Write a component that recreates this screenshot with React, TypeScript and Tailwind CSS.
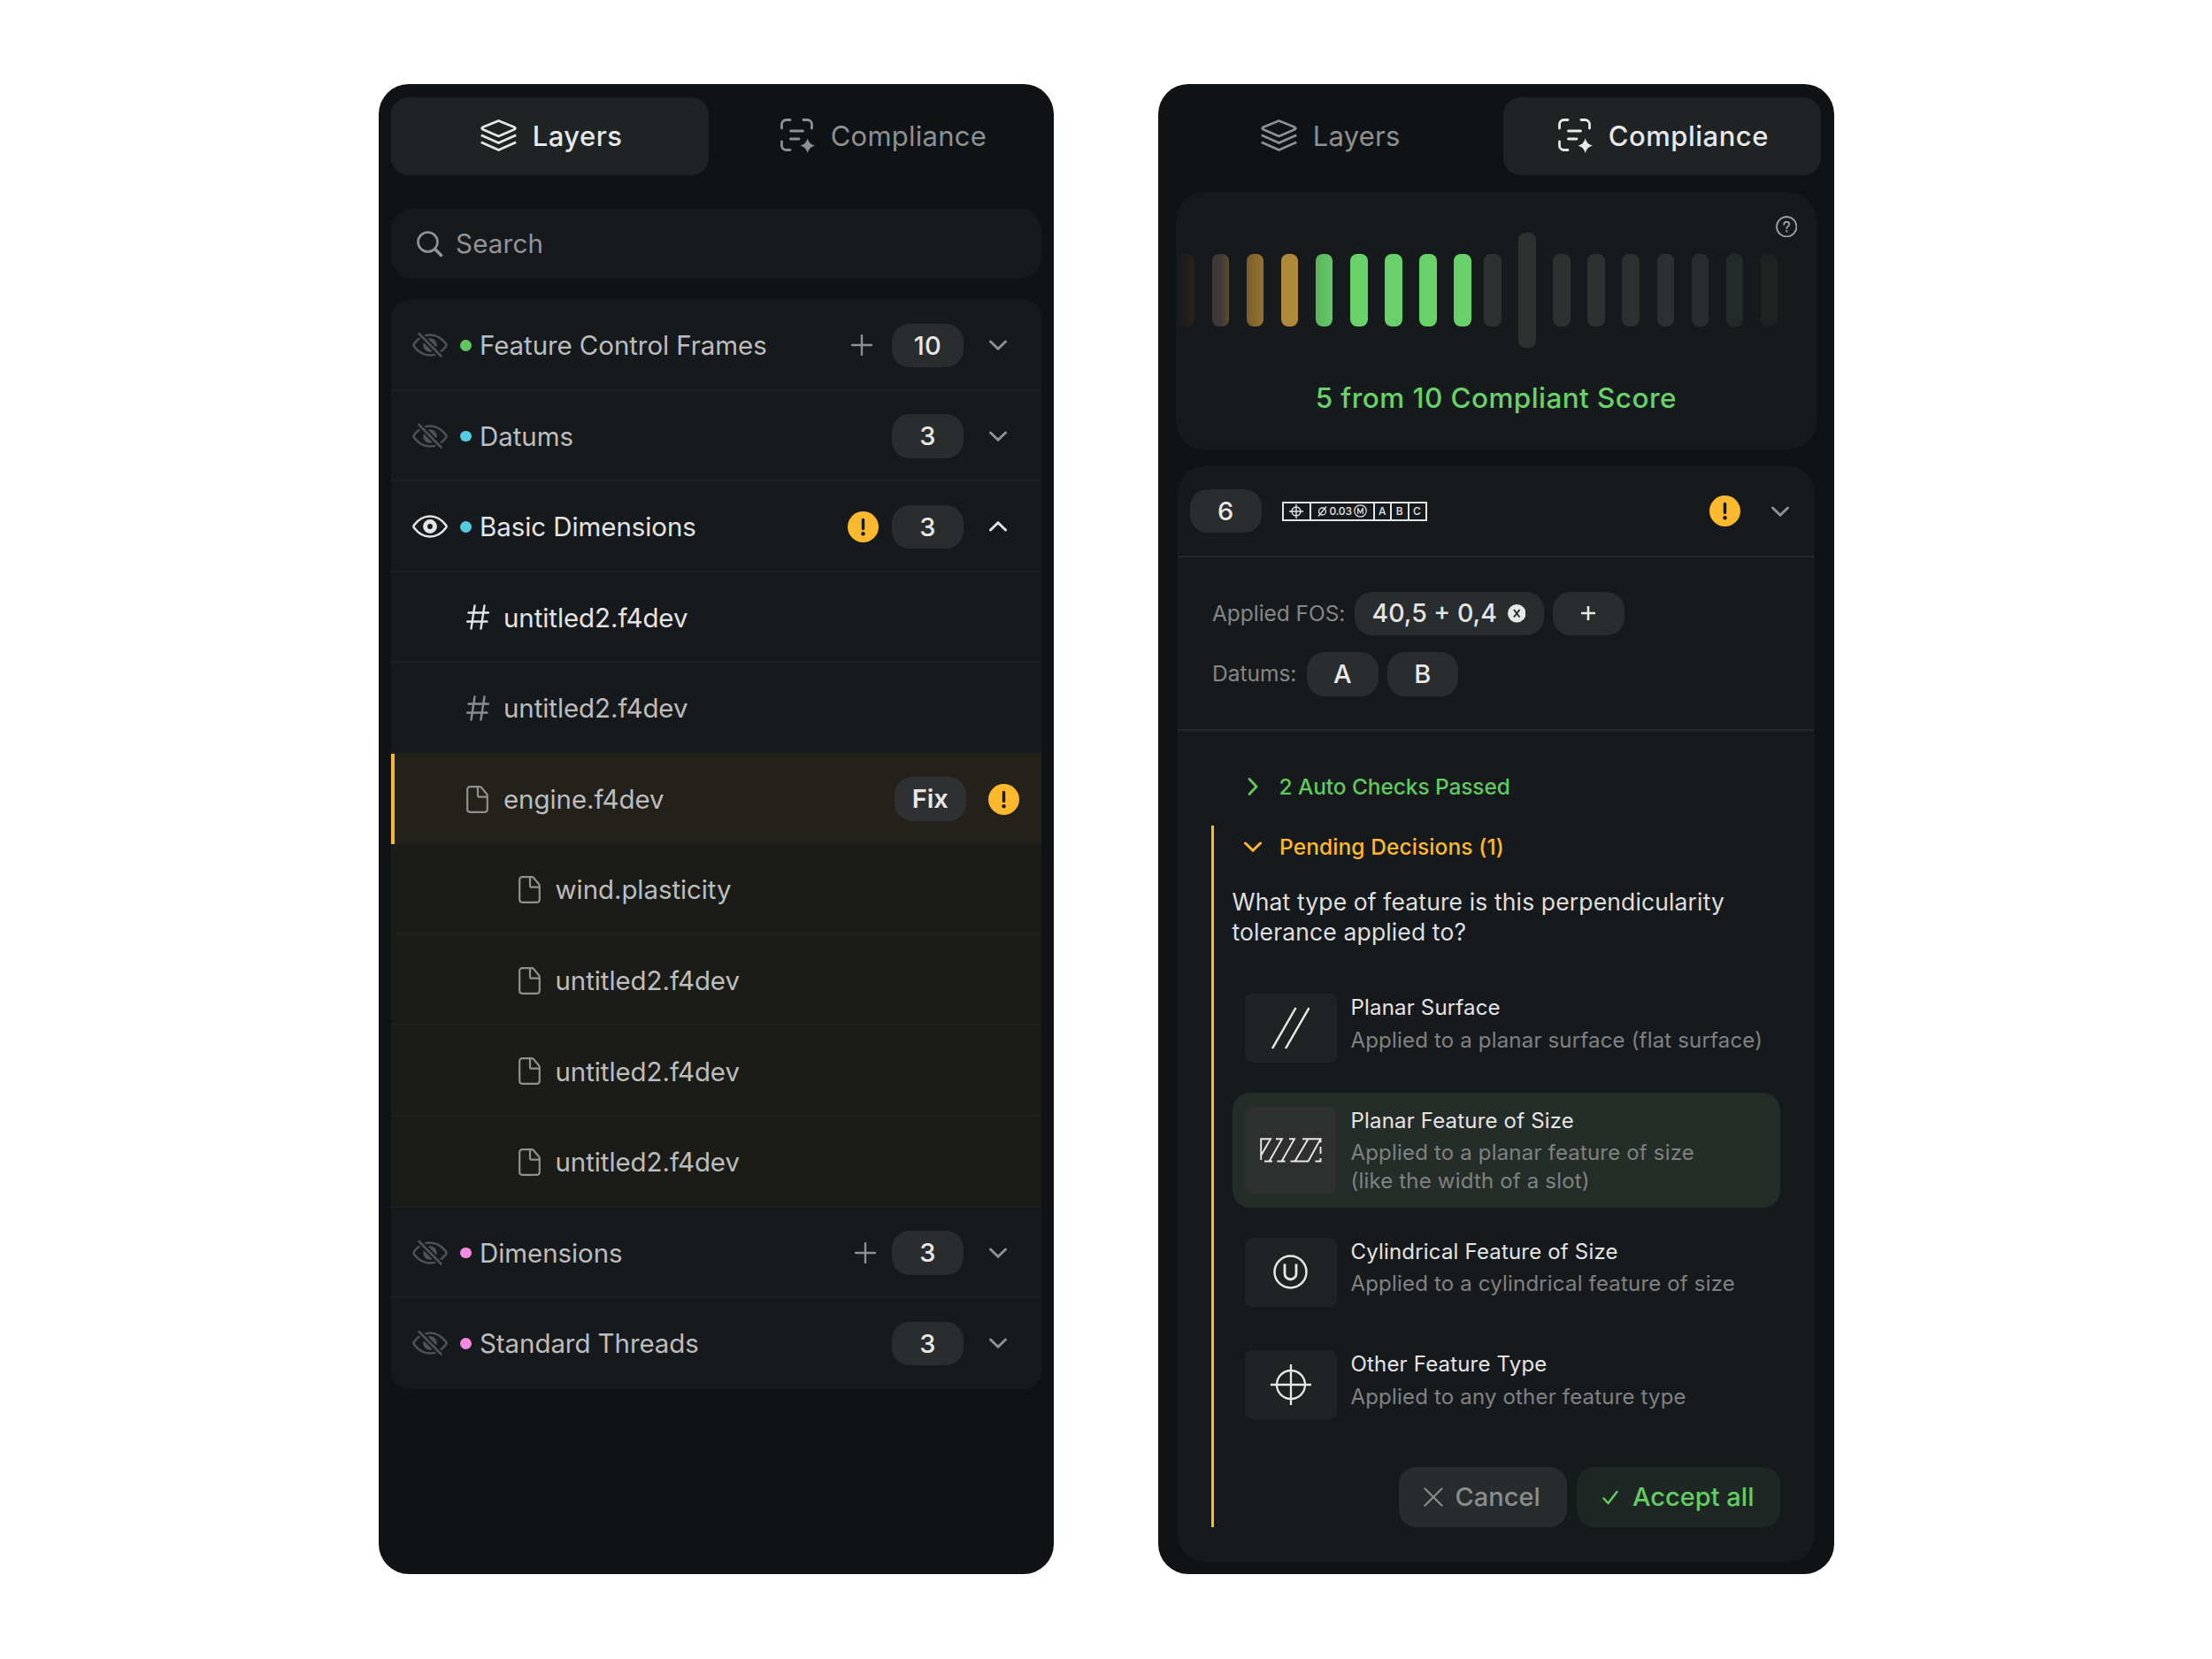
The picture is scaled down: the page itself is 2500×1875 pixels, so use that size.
import { ReactNode } from "react";
import clsx from "clsx";

export default function App() {
  return (
    <div className="flex h-[1875px] w-[2500px] items-start gap-[118px] bg-white pt-[95px] pl-[427.5px] font-['Inter','Liberation_Sans',sans-serif]">
      <LayersPanel />
      <CompliancePanel />
    </div>
  );
}

type Tone = "muted" | "active";

type Row = {
  label: string;
  kind: "group" | "hash" | "file" | "nested";
  dot?: string;
  count?: number;
  add?: boolean;
  warn?: boolean;
  open?: boolean;
  tone?: Tone;
};

const rows: Row[] = [
  { label: "Feature Control Frames", kind: "group", dot: "bg-[#62c65e]", count: 10, add: true },
  { label: "Datums", kind: "group", dot: "bg-[#56cae0]", count: 3 },
  {
    label: "Basic Dimensions",
    kind: "group",
    dot: "bg-[#56cae0]",
    count: 3,
    warn: true,
    open: true,
    tone: "active",
  },
  { label: "untitled2.f4dev", kind: "hash", tone: "active" },
  { label: "untitled2.f4dev", kind: "hash" },
  { label: "engine.f4dev", kind: "file", warn: true },
  { label: "wind.plasticity", kind: "nested" },
  { label: "untitled2.f4dev", kind: "nested" },
  { label: "untitled2.f4dev", kind: "nested" },
  { label: "untitled2.f4dev", kind: "nested" },
  { label: "Dimensions", kind: "group", dot: "bg-[#f48be0]", count: 3, add: true },
  { label: "Standard Threads", kind: "group", dot: "bg-[#f48be0]", count: 3 },
];

function LayersPanel() {
  return (
    <Panel active="layers">
      <div className="mt-[38.5px] flex h-[79px] items-center rounded-[24px] bg-[#171a1d] pl-[29px] text-[#939494]">
        <SearchIcon />
        <span className="ml-[14px] text-[29.5px] tracking-[0.2px]">Search</span>
      </div>

      <div className="mt-[24px] grid h-[1230.7px] grid-rows-12 overflow-hidden rounded-[20px] bg-[#171a1d]">
        {rows.map((row, i) => (
          <LayerRow key={i} row={row} last={i === rows.length - 1} />
        ))}
      </div>
    </Panel>
  );
}

function LayerRow({ row, last }: { row: Row; last: boolean }) {
  const active = row.tone === "active";

  return (
    <div
      className={clsx(
        "flex items-center text-[29.5px]",
        active ? "text-[#e4e4e4]" : "text-[#bcbdbd]",
        !last && row.kind !== "file" && "shadow-[inset_0_-2px_#1d2123]",
        row.kind === "group" && "pl-[24px]",
        row.kind === "hash" && "pl-[85px]",
        row.kind === "file" && "border-l-4 border-[#fdb92e] bg-[#24211b] pl-[81px]",
        row.kind === "nested" && "bg-[#1b1c18] pl-[143.5px]"
      )}
    >
      {row.kind === "group" && (
        <>
          {active ? <EyeIcon /> : <EyeOffIcon />}
          <span className={clsx("mr-[9.5px] ml-[14px] size-[12.5px] rounded-full", row.dot)} />
        </>
      )}
      {row.kind === "hash" && (
        <HashIcon className={clsx("mr-[16px]", active ? "text-[#e4e4e4]" : "text-[#8b8c8c]")} />
      )}
      {(row.kind === "file" || row.kind === "nested") && <FileIcon />}

      <span className="flex-1 tracking-[-0.08px]">{row.label}</span>

      {row.kind === "group" && (
        <div className="flex items-center pr-[39px]">
          {row.warn && <WarnIcon className="mr-[15px]" />}
          {row.add && <PlusIcon className={row.count === 10 ? "mr-[22px]" : "mr-[18px]"} />}
          <Pill>{row.count}</Pill>
          <Chevron
            className={clsx("ml-[29px]", row.open ? "rotate-180 text-[#e4e4e4]" : "text-[#8f9090]")}
          />
        </div>
      )}
      {row.kind === "file" && (
        <div className="flex items-center gap-[25px] pr-[25px]">
          <Pill strong>Fix</Pill>
          <WarnIcon />
        </div>
      )}
    </div>
  );
}

const leftBars = [
  "bg-linear-to-r from-[#171a1d] to-[#28241b]",
  "bg-linear-to-r from-[#3e3938] from-50% to-[#5e4c2c]",
  "bg-linear-to-r from-[#7a5e2a] to-[#957230]",
  "bg-[#b0893b]",
  "bg-linear-to-r from-[#5cb45c] to-[#65c866]",
  "bg-[#69d169]",
  "bg-[#69d169]",
  "bg-[#69d169]",
  "bg-[#69d169]",
];

const rightBars = [
  "h-[82px] bg-[#2f3131]",
  "h-[130px] bg-[#2f3131]",
  "h-[82px] bg-[#2f3131]",
  "h-[82px] bg-[#2f3131]",
  "h-[82px] bg-[#2e3030]",
  "h-[82px] bg-[#2d2f30]",
  "h-[82px] bg-[#2a2d2e]",
  "h-[82px] bg-[#242a28]",
  "h-[82px] bg-[#1e2221]",
];

const options = [
  {
    title: "Planar Surface",
    text: ["Applied to a planar surface (flat surface)"],
    icon: <ParallelIcon />,
  },
  {
    title: "Planar Feature of Size",
    text: ["Applied to a planar feature of size", "(like the width of a slot)"],
    icon: <HatchIcon />,
    selected: true,
  },
  {
    title: "Cylindrical Feature of Size",
    text: ["Applied to a cylindrical feature of size"],
    icon: <CircledUIcon />,
  },
  {
    title: "Other Feature Type",
    text: ["Applied to any other feature type"],
    icon: <PositionIcon />,
  },
];

function CompliancePanel() {
  return (
    <Panel active="compliance">
      {/* Score */}
      <div className="mx-[5px] mt-[19.5px] h-[291px] rounded-[32px] bg-[#171a1d]">
        <div className="flex h-[51px] items-end justify-end pr-[22px]">
          <HelpIcon />
        </div>
        <div className="-mt-[5px] flex h-[130px] items-center gap-[19.5px] pl-[2px]">
          {leftBars.map((bar, i) => (
            <div key={i} className={clsx("h-[82px] w-[19.6px] shrink-0 rounded-[8px]", bar)} />
          ))}
          <div className="-ml-[5.3px] flex items-center gap-[19.5px]">
            {rightBars.map((bar, i) => (
              <div key={i} className={clsx("w-[19.6px] shrink-0 rounded-[8px]", bar)} />
            ))}
          </div>
        </div>
        <div className="mt-[36px] text-center text-[31.5px] leading-[42px] font-medium tracking-[0.42px] text-[#69d169]">
          5 from 10 Compliant Score
        </div>
      </div>

      {/* Checks */}
      <div className="mx-[7.5px] mt-[19px] h-[1238px] rounded-[30px] bg-[#171a1d]">
        <div className="flex h-[103px] items-center border-b-2 border-[#25292a] pr-[29px] pl-[14px]">
          <Pill>6</Pill>
          <ControlFrame />
          <WarnIcon className="mr-[34.5px] ml-auto" />
          <Chevron className="text-[#8f9090]" />
        </div>

        <div className="flex h-[196px] flex-col gap-[19px] border-b-2 border-[#25292a] pt-[38.5px] pl-[39px] text-[24.5px] text-[#858686]">
          <div className="flex items-center">
            <span className="w-[160.5px] tracking-[-0.05px]">Applied FOS:</span>
            <div className="flex h-[49.5px] w-[214.5px] items-center justify-between rounded-[20px] bg-[#292d2e] pr-[21px] pl-[20px] text-[28.5px] font-medium text-[#e4e4e4]">
              40,5 + 0,4
              <ClearIcon />
            </div>
            <Pill className="ml-[10px]">
              <svg width="16" height="16" viewBox="0 0 16 16" stroke="currentColor" strokeWidth="2.6">
                <path d="M8 0v16M0 8h16" />
              </svg>
            </Pill>
          </div>
          <div className="flex items-center">
            <span className="w-[107px]">Datums:</span>
            <Pill>A</Pill>
            <Pill className="ml-[10px]">B</Pill>
          </div>
        </div>

        <div className="flex h-[107px] items-end pb-[29px] pl-[76px] text-[24.5px] font-medium text-[#62c95f]">
          <div className="flex w-[38.5px] pb-[5px] pl-[2.5px]">
            <svg width="12" height="20" viewBox="0 0 12 20" fill="none" stroke="currentColor" strokeWidth="2.8" strokeLinecap="round" strokeLinejoin="round">
              <path d="m2 1.5 8 8.5-8 8.5" />
            </svg>
          </div>
          <span className="leading-[30px] tracking-[-0.1px]">2 Auto Checks Passed</span>
        </div>

        <div className="ml-[38px] flex h-[793px] flex-col border-l-3 border-[#fdb92e] pl-[20.5px]">
          <div className="mt-[9px] flex h-[30px] items-center pl-[13.5px] text-[24.5px] font-medium text-[#fdb92e]">
            <Chevron />
            <span className="ml-[20px] tracking-[0.1px]">Pending Decisions (1)</span>
          </div>

          <p className="mt-[29.5px] text-[26.5px] leading-[34px] tracking-[0.13px] text-[#dfdfdf]">
            What type of feature is this perpendicularity
            <br />
            tolerance applied to?
          </p>

          <div className="mt-[37.5px] flex w-[619.5px] flex-col gap-[17.8px]">
            {options.map((option) => (
              <div
                key={option.title}
                className={clsx(
                  "flex rounded-[20px] px-[14px] py-[16px]",
                  option.selected && "bg-[#252d29]"
                )}
              >
                <div
                  className={clsx(
                    "flex w-[104.5px] items-center justify-center rounded-[8px] text-[#e8e8e8]",
                    option.selected ? "h-[98px] bg-[#2d302f]" : "h-[78px] bg-[#1f2324]"
                  )}
                >
                  {option.icon}
                </div>
                <div className="-mb-1 ml-[15.5px] text-[24px] tracking-[0.18px]">
                  <div className="leading-[32px] text-[#e4e4e4]">{option.title}</div>
                  <div className="mt-[4.5px] leading-[31.7px] text-[#808282]">
                    {option.text.map((line) => (
                      <div key={line}>{line}</div>
                    ))}
                  </div>
                </div>
              </div>
            ))}
          </div>

          <div className="mt-auto flex w-[619.5px] justify-end gap-[10.5px] text-[29px] font-medium">
            <button className="flex h-[68px] w-[190px] items-center rounded-[20px] bg-[#282c2d] pl-[27.5px] text-[#8b8c8c]">
              <svg width="22" height="22" viewBox="0 0 22 22" stroke="currentColor" strokeWidth="2.2" strokeLinecap="round">
                <path d="m1.5 1.5 19 19M20.5 1.5l-19 19" />
              </svg>
              <span className="ml-[14px]">Cancel</span>
            </button>
            <button className="flex h-[68px] w-[230.5px] items-center rounded-[20px] bg-[#1f2725] pl-[29px] text-[#64cc62]">
              <svg width="18" height="17" viewBox="0 0 18 17" fill="none" stroke="currentColor" strokeWidth="2.4" strokeLinecap="round" strokeLinejoin="round">
                <path d="m1.5 9.5 5 5.5L16.5 2" />
              </svg>
              <span className="ml-[16.5px]">Accept all</span>
            </button>
          </div>
        </div>
      </div>
    </Panel>
  );
}

function Panel({ active, children }: { active: "layers" | "compliance"; children: ReactNode }) {
  return (
    <div className="h-[1684px] w-[763.5px] rounded-[34px] bg-[#0f1315] px-[14.5px] pt-[14.5px]">
      <div className="flex gap-[17px]">
        <Tab active={active === "layers"} icon={<LayersIcon />}>
          Layers
        </Tab>
        <Tab active={active === "compliance"} icon={<ComplianceIcon />}>
          Compliance
        </Tab>
      </div>
      {children}
    </div>
  );
}

function Tab({ active, icon, children }: { active: boolean; icon: ReactNode; children: ReactNode }) {
  return (
    <div
      className={clsx(
        "flex h-[88px] flex-1 items-center justify-center gap-[18px] rounded-[20px] text-[31px]",
        active
          ? "bg-[#1f2323] pl-[3px] font-medium tracking-[0.5px] text-[#e8e8e8]"
          : "pl-[2px] tracking-[0.25px] text-[#8f9090]"
      )}
    >
      {icon}
      <span className="pt-0.5">{children}</span>
    </div>
  );
}

function Pill({
  children,
  className,
  strong,
}: {
  children: ReactNode;
  className?: string;
  strong?: boolean;
}) {
  return (
    <div
      className={clsx(
        "flex h-[49.5px] w-[80.5px] items-center justify-center rounded-[20px] text-[29px] text-[#e8e8e8]",
        strong ? "bg-[#2f3031] font-semibold" : "bg-[#292d2e] font-medium",
        className
      )}
    >
      {children}
    </div>
  );
}

// Feature control frame: position | dia 0.03 (M) | A | B | C
function ControlFrame() {
  return (
    <div className="ml-[23px] flex h-[22px] w-[164px] divide-x-2 divide-[#e4e4e4] border-2 border-[#e4e4e4] text-[12px] leading-[18px] font-medium text-[#e4e4e4]">
      <div className="flex w-[31px] shrink-0 items-center justify-center">
        <svg width="16" height="16" viewBox="0 0 16 16" fill="none" stroke="currentColor" strokeWidth="1.4">
          <circle cx="8" cy="8" r="5" />
          <path d="M8 0v16M0 8h16" />
        </svg>
      </div>
      <div className="flex w-[72px] shrink-0 items-center pl-[7px]">
        <svg width="11" height="12" viewBox="0 0 11 12" fill="none" stroke="currentColor" strokeWidth="1.3">
          <circle cx="5.5" cy="6" r="4" />
          <path d="M1 11.5 10 .5" />
        </svg>
        <span className="ml-[3px] w-[27px] tracking-[-0.2px]">0.03</span>
        <svg width="15" height="15" viewBox="0 0 15 15" fill="none" stroke="currentColor" strokeWidth="1.2">
          <circle cx="7.5" cy="7.5" r="6.7" />
          <path d="M4.7 11V4.2l2.8 5.3 2.8-5.3V11" />
        </svg>
      </div>
      <div className="w-[19.5px] text-center">A</div>
      <div className="w-[19.5px] text-center">B</div>
      <div className="w-[18px] text-center">C</div>
    </div>
  );
}

function LayersIcon() {
  return (
    <svg width="41" height="37" viewBox="0 0 41 37" fill="none" stroke="currentColor" strokeWidth="2.7" strokeLinejoin="round">
      <path d="M20.5 1.5 37.8 8.4Q41 10 37.8 11.6L20.5 19 3.2 11.6Q0 10 3.2 8.4Z" />
      <path d="m.8 17.7 19.7 8.9 19.7-8.9M.8 25.7l19.7 8.9 19.7-8.9" />
    </svg>
  );
}

function ComplianceIcon() {
  return (
    <svg width="39" height="39" viewBox="0 0 39 39" fill="none" stroke="currentColor" strokeWidth="2.8" strokeLinecap="round">
      <path d="M1.5 11V6.5a5 5 0 0 1 5-5H11M26 1.5h4.5a5 5 0 0 1 5 5V11M1.5 26v4.5a5 5 0 0 0 5 5H11" />
      <path d="M11.5 14h14M11.5 23h9.5" />
      <path
        d="M30.7 22.2Q32.3 29.1 39 30.7 32.3 32.3 30.7 39 29.1 32.3 22.4 30.7 29.1 29.1 30.7 22.2Z"
        fill="currentColor"
        stroke="none"
      />
    </svg>
  );
}

function SearchIcon() {
  return (
    <svg width="30" height="30" viewBox="0 0 30 30" fill="none" stroke="currentColor" strokeLinecap="round">
      <circle cx="12.5" cy="12.5" r="11" strokeWidth="2.6" />
      <path d="m21 21 6.5 6.5" strokeWidth="3.6" />
    </svg>
  );
}

function EyeIcon() {
  return (
    <svg width="40" height="26" viewBox="0 0 40 26" fill="none" stroke="currentColor" strokeWidth="2.6">
      <path d="M2 11.5C6.5 5.5 12.5 1.5 20 1.5s13.5 4 18 10q1 1.5 0 3c-4.5 6-10.5 10-18 10s-13.5-4-18-10q-1-1.5 0-3Z" />
      <circle cx="20" cy="13" r="5.4" strokeWidth="5" />
    </svg>
  );
}

function EyeOffIcon() {
  return (
    <svg className="overflow-visible text-[#505252]" width="40" height="26" viewBox="0 0 40 26" fill="none" stroke="currentColor" strokeWidth="2.6">
      <path d="M2 11.5C6.5 5.5 12.5 1.5 20 1.5s13.5 4 18 10q1 1.5 0 3c-4.5 6-10.5 10-18 10s-13.5-4-18-10q-1-1.5 0-3Z" />
      <circle cx="20" cy="13" r="7.8" fill="currentColor" stroke="none" />
      <path d="M7.5 0 32.5 25.5" stroke="#171a1d" strokeWidth="6.4" />
      <path d="M7.5 0 32.5 25.5" strokeLinecap="round" />
    </svg>
  );
}

function HashIcon({ className }: { className?: string }) {
  return (
    <svg className={className} width="26" height="29" viewBox="0 0 26 29" fill="none" stroke="currentColor" strokeWidth="2.4" strokeLinecap="round">
      <path d="M9.5 1.5 5.5 27.5M20.5 1.5l-4 26M2.5 9.5h22.5M1 19.5h22.5" />
    </svg>
  );
}

function FileIcon() {
  return (
    <svg className="mr-[17px] text-[#8f9090]" width="25" height="31" viewBox="0 0 25 31" fill="none" stroke="currentColor" strokeWidth="2.2" strokeLinejoin="round">
      <path d="M4.2 1.2H15q1.2 0 2 .9l5.9 6.9q.9 1 .9 2.3V26.8a3 3 0 0 1-3 3H4.2a3 3 0 0 1-3-3V4.2a3 3 0 0 1 3-3Z" />
      <path d="M13 1.5v9.2a2 2 0 0 0 2 2h8.5" />
    </svg>
  );
}

function PlusIcon({ className }: { className?: string }) {
  return (
    <svg className={clsx("text-[#8f9090]", className)} width="24" height="24" viewBox="0 0 24 24" stroke="currentColor" strokeWidth="2.4" strokeLinecap="round">
      <path d="M12 1v22M1 12h22" />
    </svg>
  );
}

function Chevron({ className }: { className?: string }) {
  return (
    <svg className={className} width="20" height="12" viewBox="0 0 20 12" fill="none" stroke="currentColor" strokeWidth="3" strokeLinecap="round" strokeLinejoin="round">
      <path d="m1.5 2 8.5 8.3L18.5 2" />
    </svg>
  );
}

function WarnIcon({ className }: { className?: string }) {
  return (
    <svg className={className} width="35" height="35" viewBox="0 0 35 35">
      <circle cx="17.5" cy="17.5" r="17.5" fill="#fdb92e" />
      <path d="M17.5 9.5v10" stroke="#171a1d" strokeWidth="3.4" strokeLinecap="round" />
      <circle cx="17.5" cy="25.3" r="2.2" fill="#171a1d" />
    </svg>
  );
}

function HelpIcon() {
  return (
    <svg className="text-[#9b9c9c]" width="24.5" height="24.5" viewBox="0 0 24.5 24.5" fill="none" stroke="currentColor" strokeWidth="1.9" strokeLinecap="round">
      <circle cx="12.25" cy="12.25" r="11.2" />
      <path d="M9.3 9.7c0-1.8 1.3-3 3-3s3 1.1 3 2.8c0 2.2-3 2.3-3 4.6" />
      <circle cx="12.25" cy="17.3" r=".4" />
    </svg>
  );
}

function ClearIcon() {
  return (
    <svg width="20.5" height="20.5" viewBox="0 0 20.5 20.5">
      <circle cx="10.25" cy="10.25" r="10.25" fill="#e8e8e8" />
      <path d="m7 6 6.5 8.5M13.5 6 7 14.5" stroke="#292d2e" strokeWidth="2" />
    </svg>
  );
}

function ParallelIcon() {
  return (
    <svg width="43" height="48" viewBox="0 0 43 48" stroke="currentColor" strokeWidth="2.5">
      <path d="M1 47 27.5 1M16 47 42.5 1" />
    </svg>
  );
}

function HatchIcon() {
  return (
    <svg width="70" height="28" viewBox="0 0 70 28" fill="none" stroke="currentColor" strokeWidth="1.9">
      <path d="M1.2 25V1.2H12L1.2 20M18 1.2h7L10.5 26.5M5 26.5h9M33 1.2h6L24.5 26.5M19.5 26.5h9M48 1.2h20.5L54.5 26.5h-20M54.5 1.2 39.5 26.5M68.5 1.2v4M68.5 10v8M62.5 26.5h6V23" />
    </svg>
  );
}

function CircledUIcon() {
  return (
    <svg width="39" height="39" viewBox="0 0 39 39" fill="none" stroke="currentColor" strokeWidth="2.5">
      <circle cx="19.5" cy="19.5" r="18" />
      <path d="M13 10.5v11a6.5 6.5 0 0 0 13 0v-11" strokeWidth="2.8" />
    </svg>
  );
}

function PositionIcon() {
  return (
    <svg width="46" height="46" viewBox="0 0 46 46" fill="none" stroke="currentColor" strokeWidth="2.3">
      <circle cx="23" cy="23" r="16" />
      <path d="M23 0v46M0 23h46" />
    </svg>
  );
}
